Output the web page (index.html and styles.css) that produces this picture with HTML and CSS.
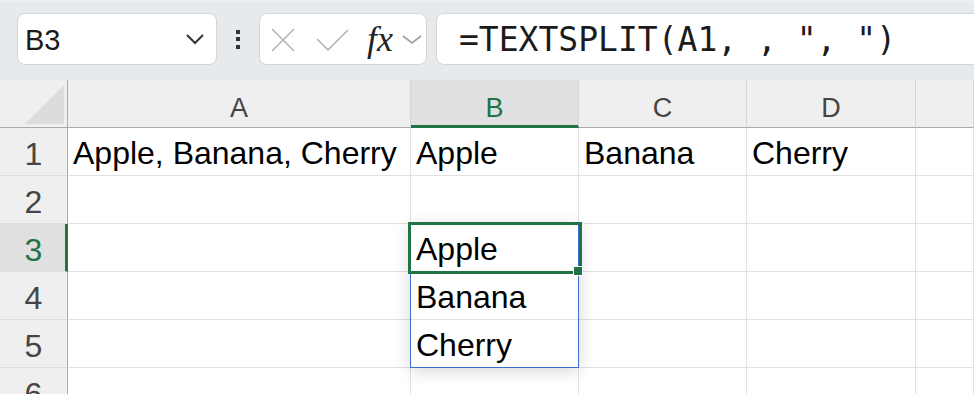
FILE: index.html
```html
<!DOCTYPE html>
<html>
<head>
<meta charset="utf-8">
<link rel="stylesheet" href="styles.css">
</head>
<body>
<div class="app">
  <div class="toolbar">
    <div class="namebox">
      <span class="name">B3</span>
      <svg class="chev" width="20" height="12" viewBox="0 0 20 12"><path d="M2 2 L10 10 L18 2" fill="none" stroke="#333" stroke-width="2"/></svg>
    </div>
    <div class="dots"><span></span><span></span><span></span></div>
    <div class="fxbox">
      <svg class="ico-x" width="24" height="24" viewBox="0 0 24 24"><path d="M1 1 L23 23 M23 1 L1 23" fill="none" stroke="#b5b5b5" stroke-width="1.6"/></svg>
      <svg class="ico-check" width="33" height="22" viewBox="0 0 33 22"><path d="M1 10 L12 21 L32 1" fill="none" stroke="#b5b5b5" stroke-width="1.6"/></svg>
      <span class="fx">fx</span>
      <svg class="chev-s" width="20" height="9" viewBox="0 0 20 9"><path d="M1 1 L10 8 L19 1" fill="none" stroke="#a0a0a0" stroke-width="1.6"/></svg>
    </div>
    <div class="formula">=TEXTSPLIT(A1, , ", ")</div>
  </div>

  <div class="sheet">
    <div class="corner"><span class="tri"></span></div>
    <div class="ch">A</div>
    <div class="ch sel">B</div>
    <div class="ch">C</div>
    <div class="ch">D</div>
    <div class="ch"></div>

    <div class="rh">1</div>
    <div class="c">Apple, Banana, Cherry</div>
    <div class="c">Apple</div>
    <div class="c">Banana</div>
    <div class="c">Cherry</div>
    <div class="c"></div>

    <div class="rh">2</div>
    <div class="c"></div><div class="c"></div><div class="c"></div><div class="c"></div><div class="c"></div>

    <div class="rh sel">3</div>
    <div class="c"></div>
    <div class="c">Apple</div>
    <div class="c"></div><div class="c"></div><div class="c"></div>

    <div class="rh">4</div>
    <div class="c"></div>
    <div class="c">Banana</div>
    <div class="c"></div><div class="c"></div><div class="c"></div>

    <div class="rh">5</div>
    <div class="c"></div>
    <div class="c">Cherry</div>
    <div class="c"></div><div class="c"></div><div class="c"></div>

    <div class="rh">6</div>
    <div class="c"></div><div class="c"></div><div class="c"></div><div class="c"></div><div class="c"></div>

    <div class="spill"></div>
    <div class="active"></div>
    <div class="handle"></div>
  </div>
</div>
</body>
</html>
```

FILE: styles.css
```css
* { box-sizing: border-box; }
html, body {
  margin: 0;
  padding: 0;
  width: 974px;
  height: 394px;
  overflow: hidden;
  background: #ffffff;
}
.app {
  width: 974px;
  height: 394px;
  overflow: hidden;
  font-family: "Liberation Sans", Arial, sans-serif;
}

/* ---------- toolbar ---------- */
.toolbar {
  height: 80px;
  background: #e6eaed;
  box-shadow: inset 0 3px 2px -1px #eef0f2;
  display: flex;
  align-items: flex-start;
  padding: 13px 0 0 17px;
}
.namebox {
  width: 200px;
  height: 52px;
  background: #fff;
  border: 1px solid #d3d6d9;
  border-radius: 8px;
  display: flex;
  align-items: center;
  padding-left: 7px;
  padding-right: 10px;
}
.name {
  font-size: 29px;
  color: #1b1b1b;
  flex: 1;
  padding-top: 2px;
}
.chev { margin-right: 1px; }
.dots {
  width: 42px;
  height: 52px;
  display: flex;
  flex-direction: column;
  align-items: center;
  justify-content: center;
  gap: 3.5px;
}
.dots span {
  width: 4px;
  height: 4px;
  background: #333;
}
.fxbox {
  width: 168px;
  height: 52px;
  background: #fff;
  border: 1px solid #d3d6d9;
  border-radius: 8px;
  display: flex;
  align-items: center;
  padding-left: 11px;
}
.ico-x { margin-top: 1px; }
.ico-check { margin-left: 21px; margin-top: 1px; }
.fx {
  font-family: "Liberation Serif", "Times New Roman", serif;
  font-style: italic;
  font-size: 36px;
  color: #222;
  margin-left: 18px;
  margin-top: -1px;
  letter-spacing: 0;
}
.chev-s { margin-left: 9px; margin-top: 1px; }
.formula {
  flex: 1;
  height: 52px;
  margin-left: 9px;
  margin-right: -20px;
  background: #fff;
  border: 1px solid #d3d6d9;
  border-radius: 8px;
  display: flex;
  align-items: center;
  padding-left: 22px;
  font-family: "DejaVu Sans Mono", "Liberation Mono", monospace;
  font-size: 33px;
  color: #1b1b1b;
  white-space: pre;
}

/* ---------- sheet ---------- */
.sheet {
  position: relative;
  display: grid;
  grid-template-columns: 68px 343px 168px 168px 169px 1fr;
  grid-auto-rows: 48px;
  background: #fff;
}
.corner {
  background: #efefef;
  border-right: 1px solid #a9a9a9;
  border-bottom: 1px solid #a9a9a9;
  position: relative;
}
.tri {
  position: absolute;
  left: 25px;
  top: 5px;
  width: 39px;
  height: 39px;
  background: #dcdcdc;
  clip-path: polygon(100% 0, 100% 100%, 0 100%);
}
.ch {
  background: #efefef;
  border-right: 1px solid #d5d5d5;
  border-bottom: 1px solid #a9a9a9;
  display: flex;
  align-items: flex-end;
  justify-content: center;
  font-size: 27px;
  line-height: 27px;
  color: #454545;
  padding-bottom: 5px;
}
.ch.sel {
  background: #e0e0e0;
  border-bottom: 3px solid #217346;
  color: #217346;
  padding-bottom: 3px;
}
.rh {
  background: #efefef;
  border-right: 1px solid #a9a9a9;
  border-bottom: 1px solid #dedede;
  display: flex;
  align-items: flex-end;
  justify-content: center;
  font-size: 32px;
  line-height: 32px;
  color: #454545;
  padding-bottom: 5px;
}
.rh.sel {
  background: #e0e0e0;
  border-right: 3px solid #217346;
  color: #217346;
  padding-left: 2px;
}
.c {
  border-right: 1px solid #e1e1e1;
  border-bottom: 1px solid #e1e1e1;
  display: flex;
  align-items: flex-end;
  font-size: 32px;
  line-height: 32px;
  color: #000;
  padding: 0 0 6px 5px;
  white-space: nowrap;
  overflow: visible;
}

/* selection overlays */
.spill {
  position: absolute;
  left: 410px;
  top: 143px;
  width: 169px;
  height: 145px;
  border: 1px solid #3b6fcf;
  box-shadow: 0 3px 16px rgba(0, 0, 0, 0.16);
  pointer-events: none;
}
.active {
  position: absolute;
  left: 408px;
  top: 142px;
  width: 174px;
  height: 52px;
  border: 3px solid #217346;
  pointer-events: none;
}
.handle {
  position: absolute;
  left: 573px;
  top: 186px;
  width: 10px;
  height: 10px;
  background: #217346;
  border: 1px solid #fff;
}
```
